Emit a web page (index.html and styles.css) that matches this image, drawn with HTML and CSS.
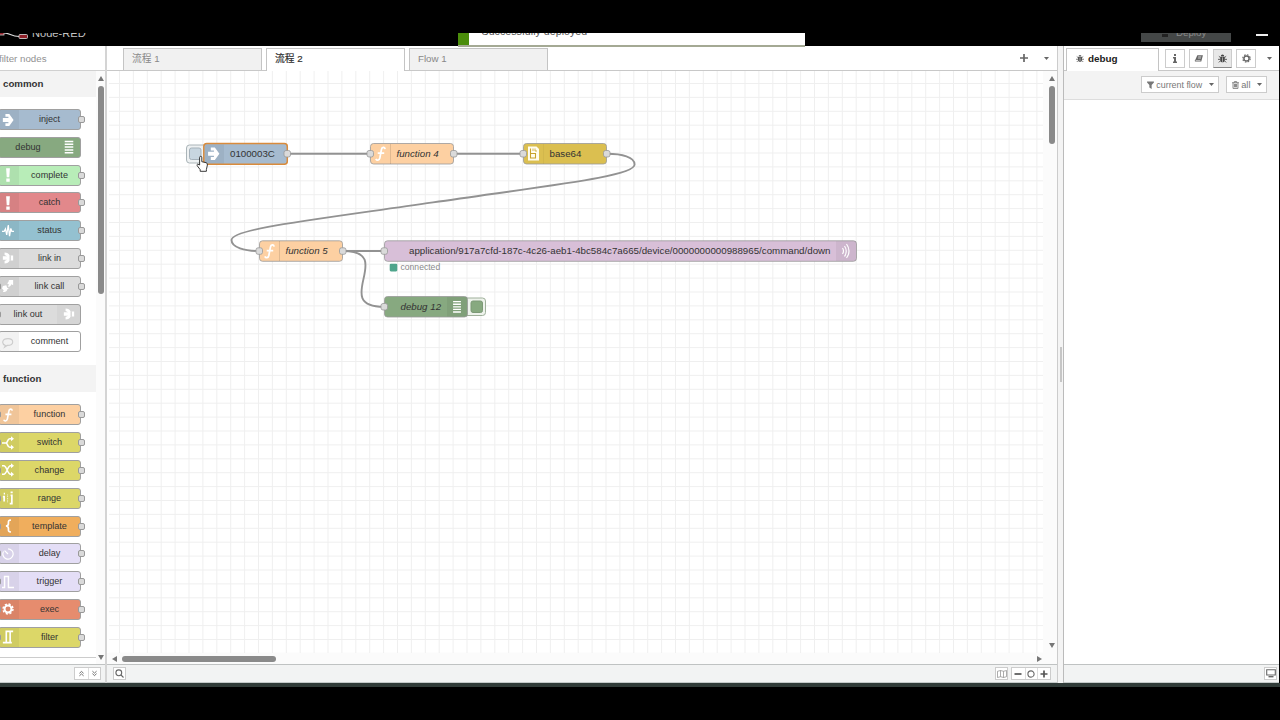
FILE: index.html
```html
<!DOCTYPE html>
<html lang="zh">
<head>
<meta charset="utf-8">
<title>Node-RED</title>
<link rel="stylesheet" href="styles.css">
</head>
<body>
<svg class="defs" width="0" height="0">
  <defs>
    <symbol id="i-arrow" viewBox="0 0 14 16"><path fill="currentColor" d="M4 1h4.500l5 7-5 7H4v-3.300h3.500v-1.500H1V5.800h6.500V4.300H4z"/></symbol>
    <symbol id="i-bars" viewBox="0 0 14 16"><path stroke="currentColor" stroke-width="1.700" d="M2 1.500h10M2 4.800h10M2 8.100h10M2 11.400h10M2 14.700h10"/></symbol>
    <symbol id="i-bang" viewBox="0 0 14 16"><path fill="currentColor" d="M4.800 0h4.400l-.7 10.500h-3zM5 12.200h4V16H5z"/></symbol>
    <symbol id="i-pulse" viewBox="0 0 14 16"><path fill="none" stroke="currentColor" stroke-width="1.500" d="M0 8.500h2.500l1.500-3 1.500 7L7.300 1l1.500 13L10.300 5l1.200 3.500H14"/></symbol>
    <symbol id="i-link" viewBox="0 0 14 16"><path fill="currentColor" d="M3 1.500C6 1.500 8 3 9 5h4v6H9c-1 2-3 3.500-6 3.500v-3l3-1.500H1V6h5L3 4.500z"/><path stroke="#bbb" d="M9.500 5v6"/></symbol>
    <symbol id="i-call" viewBox="0 0 14 16"><path fill="currentColor" d="M8 1h5v6l-2-1c-1 2-2 3-4 3l1-3-2-1c1-1 2-2 2-4zM1 8l4-1 1 3 2 1-2 1c0 2-2 3-5 3l1-2-2-2z"/></symbol>
    <symbol id="i-talk" viewBox="0 0 14 16"><path fill="none" stroke="currentColor" stroke-width="1.300" d="M4 12C-1 10 0 4 7 4s8 8-1 8l-3 2z"/></symbol>
    <symbol id="i-fn" viewBox="0 0 14 16"><path fill="none" stroke="currentColor" stroke-width="1.900" d="M12 3C11.500 .5 8.500 .3 8 3.500L6.300 12.500C5.500 15.500 3 15.700 2 13.500M4 7.200h7"/></symbol>
    <symbol id="i-switch" viewBox="0 0 14 16"><path fill="none" stroke="currentColor" stroke-width="1.900" d="M0 8h4.500C7 8 6 3 9 3h3M4.500 8C7 8 6 13 9 13h3"/><path fill="currentColor" d="M10.500 0L14 3l-3.500 3zM10.500 10l3.500 3-3.500 3z"/></symbol>
    <symbol id="i-change" viewBox="0 0 14 16"><path fill="none" stroke="currentColor" stroke-width="1.800" d="M0 3h2c4 0 4 10 8 10h2M0 13h2c4 0 4-10 8-10h2"/><path fill="currentColor" d="M10.500 0L14 3l-3.500 3zM10.500 10l3.500 3-3.500 3z"/></symbol>
    <symbol id="i-range" viewBox="0 0 14 16"><path fill="none" stroke="currentColor" stroke-width="2" d="M1 6.500h1.500V12M10 5h1.500v9.500H9M2 3h1.500M10 1.500h2.500"/><path stroke="currentColor" stroke-dasharray="1 1" d="M6.500 4v9"/></symbol>
    <symbol id="i-brace" viewBox="0 0 14 16"><path fill="none" stroke="currentColor" stroke-width="2" d="M10.500 1C7 1 7.500 3 7.500 5S7 8 4.500 8c2.500 0 3 1 3 3s-.5 4 3 4"/></symbol>
    <symbol id="i-delay" viewBox="0 0 14 16"><path fill="none" stroke="currentColor" stroke-width="1.400" d="M7 2a6 6 0 1 1-5.200 3M7 8L3 4"/></symbol>
    <symbol id="i-trigger" viewBox="0 0 14 16"><path fill="none" stroke="currentColor" stroke-width="1.700" d="M0 14.500h3V1.500h4.500v13H14"/></symbol>
    <symbol id="i-cog" viewBox="0 0 16 16"><circle cx="8" cy="8" r="4.600" fill="none" stroke="currentColor" stroke-width="2.600"/><circle cx="8" cy="8" r="6.600" fill="none" stroke="currentColor" stroke-width="2" stroke-dasharray="2.800 2.383"/></symbol>
    <symbol id="i-filter" viewBox="0 0 14 16"><path fill="none" stroke="currentColor" stroke-width="1.900" d="M1 14.500h4V1.500h8M9.500 1.500v13H5M9.500 14.500h2"/></symbol>
    <symbol id="i-bug" viewBox="0 0 16 16"><path fill="currentColor" d="M5 4a3 3 0 0 1 6 0zM4 5h8v6c0 5-8 5-8 0z"/><path fill="none" stroke="currentColor" stroke-width="1.500" d="M4.500 6.500L1.500 4M11.500 6.500l3-2.500M4 9.500H0M12 9.500h4M4.500 12l-3 3M11.500 12l3 3"/><path stroke="#eee" d="M8 6v8"/></symbol>
    <symbol id="i-book" viewBox="0 0 16 16"><path fill="currentColor" d="M5 2h10l-3 11.500H2.500C0 13.500 0 11 1.500 10z"/><path fill="none" stroke="#fff" stroke-width="1" d="M6.500 5h5.500M6 7.300h5.500M2 11.500h8.500"/></symbol>
    <symbol id="i-caret" viewBox="0 0 10 6"><path fill="currentColor" d="M0 0h10L5 6z"/></symbol>
    <symbol id="i-funnel" viewBox="0 0 12 14"><path fill="currentColor" d="M0 1h12v1.500L8 7v7l-4-2.500V7L0 2.500z"/></symbol>
    <symbol id="i-trash" viewBox="0 0 12 14"><path fill="none" stroke="currentColor" stroke-width="1.500" d="M0 3h12M4 3V1h4v2M1.700 3v10h8.600V3M4.200 5v6M6 5v6M7.800 5v6"/></symbol>
  </defs>
</svg>

<div class="screen">
  <header class="header">
    <svg class="logo" width="30" height="12" viewBox="0 0 30 12"><path fill="none" stroke="#ddd" stroke-width="1.200" d="M4 0C10 0 11 3.500 19 3.500"/><rect x="-2" y="-3" width="6" height="5" fill="#8f2029" stroke="#ccc" stroke-width=".8"/><rect x="19" y="1.500" width="8.500" height="4" rx="1" fill="#8f2029" stroke="#ccc" stroke-width=".9"/></svg>
    <span class="brand">Node-RED</span>
    <div class="deploy"><i class="deploy-mark"></i><span>Deploy</span></div>
    <i class="menu-bar"></i>
    <div class="notice"><span>Successfully deployed</span></div>
  </header>

  <main class="main">
    <aside class="palette">
      <div class="search">filter nodes</div>
      <div class="palette-body">
        <div class="palette-list">
          <h3 class="cat">common</h3>
          <div class="nodes">
            <div class="node out c-inject"><b><svg><use href="#i-arrow"/></svg></b><span>inject</span></div>
            <div class="node rev c-debug"><b><svg><use href="#i-bars"/></svg></b><span>debug</span></div>
            <div class="node out c-complete"><b><svg><use href="#i-bang"/></svg></b><span>complete</span></div>
            <div class="node out c-catch"><b><svg><use href="#i-bang"/></svg></b><span>catch</span></div>
            <div class="node out c-status"><b><svg><use href="#i-pulse"/></svg></b><span>status</span></div>
            <div class="node out c-link"><b><svg><use href="#i-link"/></svg></b><span>link in</span></div>
            <div class="node in out c-link"><b><svg><use href="#i-call"/></svg></b><span>link call</span></div>
            <div class="node in rev c-link"><b><svg><use href="#i-link"/></svg></b><span>link out</span></div>
            <div class="node c-comment"><b><svg><use href="#i-talk"/></svg></b><span>comment</span></div>
          </div>
          <h3 class="cat cat-fn">function</h3>
          <div class="nodes">
            <div class="node in out c-fn"><b><svg><use href="#i-fn"/></svg></b><span>function</span></div>
            <div class="node in out c-yellow"><b><svg><use href="#i-switch"/></svg></b><span>switch</span></div>
            <div class="node in out c-yellow"><b><svg><use href="#i-change"/></svg></b><span>change</span></div>
            <div class="node in out c-yellow"><b><svg><use href="#i-range"/></svg></b><span>range</span></div>
            <div class="node in out c-template"><b><svg><use href="#i-brace"/></svg></b><span>template</span></div>
            <div class="node in out c-lilac"><b><svg><use href="#i-delay"/></svg></b><span>delay</span></div>
            <div class="node in out c-lilac"><b><svg><use href="#i-trigger"/></svg></b><span>trigger</span></div>
            <div class="node in out c-exec"><b><svg><use href="#i-cog"/></svg></b><span>exec</span></div>
            <div class="node in out c-yellow"><b><svg><use href="#i-filter"/></svg></b><span>filter</span></div>
          </div>
        </div>
        <div class="vscroll">
          <i class="arrow up"></i><i class="thumb thumb-palette"></i><i class="arrow down"></i>
        </div>
      </div>
      <div class="footer palette-footer">
        <div class="group">
          <span class="fbtn"><svg width="5" height="7" viewBox="0 0 6 8"><path class="line" d="M.5 3.800L3 1.500l2.500 2.300M.5 6.800L3 4.500l2.500 2.300"/></svg></span>
          <span class="fbtn"><svg width="5" height="7" viewBox="0 0 6 8"><path class="line" d="M.5 1.200L3 3.500l2.500-2.300M.5 4.200L3 6.500l2.500-2.300"/></svg></span>
        </div>
      </div>
    </aside>

    <section class="workspace">
      <nav class="tabs">
        <div class="tab">流程 1</div>
        <div class="tab active">流程 2</div>
        <div class="tab">Flow 1</div>
        <div class="tab-tools">
          <svg width="8" height="8" viewBox="0 0 8 8"><path stroke="#666" stroke-width="1.700" d="M4 0v8M0 4h8"/></svg>
          <svg class="caret"><use href="#i-caret"/></svg>
        </div>
      </nav>
      <div class="canvas-row">
        <svg class="canvas" width="936" height="582" viewBox="107 71 936 582">
          <defs>
            <pattern id="grid" x="119" y="83" width="13.900" height="13.900" patternUnits="userSpaceOnUse"><path fill="none" stroke="#efefef" d="M.5 0v13.900M0 .5h13.900"/></pattern>
          </defs>
          <rect x="109" y="71" width="934" height="582" fill="url(#grid)"/>
          <g class="wires">
            <path d="M287 153.800H370M454 153.800H523M343 251H384"/>
            <path d="M607 153.800C622 153.800 634.600 157 634.600 164.500C634.600 176 560 184 433 202.400C306 220.800 231.500 229 231.500 240C231.500 247.500 245 251 259 251"/>
            <path d="M343 251C397 251 330 306.800 384 306.800"/>
          </g>

          <rect x="186.500" y="145" width="22" height="18" rx="3" fill="#eef1f2" stroke="#aab4b8"/>
          <rect x="189.500" y="148" width="11.500" height="11.500" rx="2" fill="#c8d6e0" stroke="#a5b1ba"/>
          <rect x="203.800" y="143.500" width="83.500" height="20.700" rx="3" fill="#a6bbcf" stroke="#d98b3c" stroke-width="1.500"/>
          <path class="shade" d="M205 144.500h19v19h-19z"/>
          <use href="#i-arrow" x="207" y="146.500" width="13" height="14.500" color="#fff"/>
          <text x="230" y="157.300">0100003C</text>

          <rect class="box" x="370.500" y="143.500" width="83" height="20.500" rx="3" fill="#fdd0a2"/>
          <path class="split" d="M390.500 144v20"/>
          <use href="#i-fn" x="374" y="145.500" width="13" height="16.500" color="#fff"/>
          <text class="it" x="396.500" y="157.300">function 4</text>

          <rect class="box" x="523.500" y="143.500" width="83" height="20.500" rx="3" fill="#dbbf50"/>
          <path class="split faint" d="M543.500 144v20"/>
          <path fill="#fffdf0" d="M528 146.500h8.500l2.500 2.500v11.500h-11z"/>
          <path fill="none" stroke="#c8a22c" stroke-width="1.100" d="M530.500 148.500v9.500h5v-4.500h-5"/>
          <path fill="none" stroke="#c8a22c" stroke-width=".8" d="M533 148.500v2.500M535 148.500v2.500h2"/>
          <text x="549.500" y="157.300">base64</text>

          <rect class="box" x="259.500" y="240.800" width="83" height="20.500" rx="3" fill="#fdd0a2"/>
          <path class="split" d="M279.500 241v20"/>
          <use href="#i-fn" x="263" y="243" width="13" height="16.500" color="#fff"/>
          <text class="it" x="285.500" y="254.300">function 5</text>

          <rect class="box" x="384.500" y="240.800" width="472" height="20.500" rx="3" fill="#d8bfd8"/>
          <path class="shade" d="M836 241.300h20v19.500h-20z"/>
          <path fill="none" stroke="#fff" stroke-width="1.200" d="M842.500 248q2 3 0 6M844.500 246q3.500 5 0 10.500M846.500 244q5 7 0 14"/>
          <text x="409" y="254.300" textLength="421.500">application/917a7cfd-187c-4c26-aeb1-4bc584c7a665/device/0000000000988965/command/down</text>
          <rect x="389.700" y="263.800" width="7.600" height="7.600" rx="1.300" fill="#4fa58c"/>
          <text class="status" x="400.500" y="270.300">connected</text>

          <rect x="462" y="298" width="23.500" height="17.500" rx="3" fill="#eef3ec" stroke="#9fb09b"/>
          <rect x="471" y="301" width="11.500" height="11.500" rx="2" fill="#87a980" stroke="#7c9977"/>
          <rect class="box" x="384.500" y="296.500" width="83" height="20.500" rx="3" fill="#87a980"/>
          <path class="shade" d="M447 297h20v19.500h-20z"/>
          <use href="#i-bars" x="451.500" y="300" width="11" height="13.500" color="#fff"/>
          <text class="it" x="400.500" y="310.300">debug 12</text>

          <g class="ports">
            <rect x="284" y="150.500" width="6.500" height="6.500" rx="2"/><rect x="367" y="150.500" width="6.500" height="6.500" rx="2"/>
            <rect x="450.500" y="150.500" width="6.500" height="6.500" rx="2"/><rect x="520" y="150.500" width="6.500" height="6.500" rx="2"/>
            <rect x="603.500" y="150.500" width="6.500" height="6.500" rx="2"/><rect x="256" y="247.800" width="6.500" height="6.500" rx="2"/>
            <rect x="339.500" y="247.800" width="6.500" height="6.500" rx="2"/><rect x="381" y="247.800" width="6.500" height="6.500" rx="2"/>
            <rect x="381" y="303.500" width="6.500" height="6.500" rx="2"/>
          </g>
          <path fill="#fff" stroke="#222" stroke-width=".9" stroke-linejoin="round" d="M199.600 165v-7.300q0-1.400 1.100-1.400t1.100 1.400v4l4.300 1q1.500.5 1.300 2.300l-1 4.500v1.800h-6.200v-1.600l-3-4q-.6-1.300.5-1.600z"/>
        </svg>
        <div class="vscroll vscroll-ws">
          <i class="arrow up"></i><i class="thumb thumb-ws"></i><i class="arrow down"></i>
        </div>
      </div>
      <div class="hscroll"><i class="arrow left"></i><i class="hthumb"></i><i class="arrow right"></i></div>
      <div class="footer ws-footer">
        <span class="fbtn boxed"><svg width="9" height="9" viewBox="0 0 9 9"><circle class="line" cx="3.800" cy="3.800" r="2.900"/><path class="line" d="M6 6l2.500 2.500"/></svg></span>
        <div class="zoomers">
          <span class="fbtn boxed"><svg width="10" height="8" viewBox="0 0 10 8"><path class="line thin" d="M.5 1.300l3-.8 3 .8 3-.8v6.200l-3 .8-3-.8-3 .8zM3.500.500v6.200M6.500 1.300v6.200"/></svg></span>
          <div class="group">
            <span class="fbtn"><svg width="8" height="8" viewBox="0 0 8 8"><path stroke="#555" stroke-width="1.700" d="M.5 4h7"/></svg></span>
            <span class="fbtn"><svg width="8" height="8" viewBox="0 0 8 8"><circle class="line" cx="4" cy="4" r="3.100"/></svg></span>
            <span class="fbtn"><svg width="8" height="8" viewBox="0 0 8 8"><path stroke="#555" stroke-width="1.700" d="M4 .5v7M.5 4h7"/></svg></span>
          </div>
        </div>
      </div>
    </section>

    <div class="separator"><i></i></div>

    <aside class="sidebar">
      <nav class="side-tabs">
        <div class="side-tab"><svg width="8" height="9"><use href="#i-bug"/></svg><span>debug</span></div>
        <div class="side-btns">
          <span class="sbtn"><svg width="6" height="9" viewBox="0 0 6 9"><path fill="#666" d="M2 0h2v2H2zM1 3h3v4.500h1V9H1V7.500h1v-3H1z"/></svg></span>
          <span class="sbtn"><svg width="10" height="9"><use href="#i-book"/></svg></span>
          <span class="sbtn on"><svg width="9" height="9"><use href="#i-bug"/></svg></span>
          <span class="sbtn"><svg width="9" height="9"><use href="#i-cog"/></svg></span>
        </div>
        <svg class="caret"><use href="#i-caret"/></svg>
      </nav>
      <div class="side-tools">
        <div class="tool"><svg width="7" height="8"><use href="#i-funnel"/></svg><span class="t-flow">current flow</span><svg class="caret"><use href="#i-caret"/></svg></div>
        <div class="tool"><svg width="7" height="8"><use href="#i-trash"/></svg><span>all</span><svg class="caret"><use href="#i-caret"/></svg></div>
      </div>
      <div class="side-body"></div>
      <div class="footer side-footer">
        <span class="fbtn boxed"><svg width="10" height="9" viewBox="0 0 10 9"><path class="line" d="M.7.700h8.600v5.300H.7z"/><path stroke="#666" stroke-width="1.400" d="M2.500 7.700h5"/></svg></span>
      </div>
    </aside>
  </main>
  <div class="taskbar"></div>
</div>
</body>
</html>
```
FILE: styles.css
```css
*, *::before, *::after { box-sizing: border-box; }
body {
  margin: 0;
  background: #000;
  font-family: "Liberation Sans", "Noto Sans CJK SC", Arial, sans-serif;
  font-size: 9.73px;
  color: #444;
}
.defs { position: absolute; }
svg { display: block; flex: none; }
i { display: block; flex: none; }
.screen { width: 1280px; height: 720px; padding-top: 33px; overflow: hidden; display: flex; flex-direction: column; }

.header { height: 13px; flex: none; display: flex; align-items: flex-start; position: relative; }
.header > * { flex: none; }
.logo { width: 30px; overflow: hidden; }
.brand { width: 1109px; height: 6px; margin-left: 2px; display: flex; align-items: flex-end; font-size: 11.1px; line-height: 11px; color: #c4c4c4; overflow: hidden; }
.brand, .deploy span, .notice span { clip-path: inset(0); }
.deploy { width: 90px; height: 9px; background: #444747; color: #8a8a8a; display: flex; align-items: flex-start; overflow: hidden; }
.deploy-mark { width: 6px; height: 3px; background: #222; margin: 1px 8px 0 21px; }
.deploy span { height: 5px; display: flex; align-items: flex-end; line-height: 11px; }
.menu-bar { width: 12px; height: 2px; background: #eee; margin: 1px 0 0 25px; }
.notice { position: absolute; z-index: 2; left: 458px; top: 0; width: 347px; height: 13.5px; background: linear-gradient(90deg, #4b8d0b 11px, #fff 11px); border-bottom: 2px solid #a4a994; padding-left: 23.5px; font-size: 10.7px; color: #555; }
.notice span { height: 5px; display: flex; align-items: flex-end; line-height: 13px; }

.main { height: 637px; flex: none; display: flex; background: #f3f3f3; width: 1279px; }

.palette { width: 107px; flex: none; border-right: 2px solid #d4d4d4; background: #fff; display: flex; flex-direction: column; }
.search { height: 25px; line-height: 25px; color: #929292; border-bottom: 1px solid #d0d0d0; flex: none; margin-left: -1px; }
.palette-body { flex: 1; display: flex; overflow: hidden; }
.palette-list { width: 96px; height: 587px; overflow: hidden; border-bottom: 1px solid #ccc; }
.cat { margin: 0; height: 26px; line-height: 26px; background: #f3f3f3; font-size: 9.73px; font-weight: bold; color: #333; padding-left: 3px; }
.cat-fn { margin-top: 13px; height: 27px; line-height: 27px; }
.nodes { padding: 12px 0 0; display: flex; flex-direction: column; gap: 6.8px; margin-left: -2px; }
.node { position: relative; width: 83px; height: 21px; border: 1px solid #a0a0a0; border-radius: 3px; display: flex; font-size: 9.1px; color: #333; flex: none; }
.node b { width: 20px; background: rgba(0,0,0,.05); color: #fff; display: flex; align-items: center; justify-content: center; padding-right: 3px; }
.node b svg { width: 12px; height: 14px; }
.node span { flex: 1; text-align: center; line-height: 19px; }
.node.rev { flex-direction: row-reverse; }
.node.rev b { width: 23px; padding-right: 0; }
.node.in::before, .node.out::after { content: ""; position: absolute; top: 6px; width: 7px; height: 7px; border: 1px solid #999; border-radius: 2px; background: #dadada; }
.node.in::before { left: -5px; }
.node.out::after { right: -5px; }
.c-inject { background: #a6bbcf; }
.c-debug { background: #87a980; }
.node.c-debug b { background: none; }
.c-complete { background: #b8edb8; }
.c-catch { background: #e2888b; }
.c-status { background: #94c1d0; }
.c-link { background: #dcdcdc; }
.node.rev.c-link b { background: rgba(0,0,0,.03); }
.c-comment { background: #fff; }
.node.c-comment b { color: #ccc; }
.c-fn { background: #fdd0a2; }
.c-yellow { background: #dcd768; }
.c-template { background: #f0ae5d; }
.c-lilac { background: #e4def6; }
.c-exec { background: #e68c6e; }

.vscroll { flex: 1; display: flex; flex-direction: column; align-items: center; background: #fbfbfb; padding: 5px 0 4px; }
.arrow { width: 0; height: 0; border: 3px solid transparent; }
.up { border-bottom: 5px solid #777; border-top: 0; }
.down { border-top: 5px solid #777; border-bottom: 0; margin-top: auto; }
.left { border-right: 5px solid #777; border-left: 0; }
.right { border-left: 5px solid #777; border-right: 0; }
.thumb { width: 6px; border-radius: 3px; background: #8a8a8a; margin-top: 5px; }
.thumb-palette { height: 208px; }
.thumb-ws { height: 58px; }

.footer { flex: none; height: 19px; border-top: 1px solid #bfc2c2; border-bottom: 1px solid #c5caca; background: #f2f3f3; display: flex; align-items: center; }
.palette-footer { justify-content: flex-end; padding-right: 4px; }
.group { display: flex; border: 1px solid #ccc; background: #fff; height: 13px; }
.fbtn { width: 12.5px; display: flex; align-items: center; justify-content: center; }
.fbtn + .fbtn { border-left: 1px solid #ddd; }
.boxed { width: 13px; height: 13px; border: 1px solid #ccc; background: #fff; }
.line { fill: none; stroke: #666; stroke-width: 1.1; }
.thin { stroke-width: .7; stroke: #888; }

.workspace { width: 950px; flex: none; background: #fff; display: flex; flex-direction: column; }
.tabs { height: 25px; flex: none; display: flex; align-items: flex-end; gap: 4px; padding-left: 16px; border-bottom: 1px solid #c8c8c8; }
.tab { width: 139px; height: 22px; border: 1px solid #c4c4c4; border-bottom: 0; background: #f1f1f1; line-height: 20px; padding-left: 8px; color: #888; }
.tab.active { background: #fff; height: 23px; margin-bottom: -1px; color: #333; -webkit-text-stroke: .2px #333; }
.tab-tools { margin-left: auto; height: 24px; display: flex; align-items: center; gap: 16px; padding-right: 8px; }
.caret { width: 5px; height: 3px; color: #666; }
.canvas-row { flex: 1; display: flex; }
.canvas text { font-size: 9.73px; fill: #333; }
.canvas .it { font-style: italic; }
.canvas .status { font-size: 8.6px; fill: #888; }
.wires path { fill: none; stroke: #929292; stroke-width: 1.9; }
.box { stroke: #999; stroke-width: .8; }
.shade { fill: #000; fill-opacity: .05; }
.split { stroke: #000; stroke-opacity: .11; }
.faint { stroke-opacity: .04; }
.ports rect { fill: #dadada; stroke: #999; stroke-width: .8; }
.vscroll-ws { padding: 5px 0 5px 4px; }
.hscroll { height: 11px; flex: none; display: flex; align-items: center; background: #fbfbfb; padding: 0 15px 0 5px; }
.hthumb { width: 154px; height: 6px; border-radius: 3px; background: #8a8a8a; margin-left: 5px; }
.hscroll .right { margin-left: auto; }
.ws-footer { padding: 0 6px; justify-content: space-between; }
.zoomers { display: flex; gap: 3px; }
.zoomers .boxed { margin-right: -.5px; }
.zoomers .group .fbtn { width: 12.7px; }

.separator { width: 7px; flex: none; background: #f4f4f4; border-left: 1px solid #ccc; border-right: 1px solid #bbb; display: flex; align-items: center; justify-content: center; }
.separator i { width: 2px; height: 35px; border: 1px solid #c6c6c6; }

.sidebar { flex: 1; background: #fff; display: flex; flex-direction: column; }
.side-tabs { height: 25px; flex: none; display: flex; align-items: flex-end; padding: 0 7px 0 2px; border-bottom: 1px solid #c8c8c8; }
.side-tab { width: 93px; height: 23px; margin-bottom: -1px; background: #fff; border: 1px solid #c4c4c4; border-bottom: 0; display: flex; align-items: center; gap: 4px; padding: 0 0 3px 9px; font-size: 9.9px; font-weight: bold; color: #222; }
.side-tab svg { color: #555; }
.side-btns { display: flex; gap: 4.3px; margin: 0 auto 2px 6px; }
.sbtn { width: 19.5px; height: 19.5px; border: 1px solid #ccc; display: flex; align-items: center; justify-content: center; color: #666; }
.sbtn.on { background: #e8e8e8; border-bottom: 1px solid #888; color: #444; }
.side-tabs .caret { margin-bottom: 10px; }
.side-tools { height: 29px; flex: none; background: #f3f3f3; border-bottom: 1px solid #ddd; display: flex; justify-content: flex-end; align-items: center; gap: 7px; padding: 0 12px 1px 0; }
.tool { height: 17px; border: 1px solid #ccc; background: #fff; display: flex; align-items: center; gap: 2.5px; padding: 0 4px 0 5px; color: #777; font-size: 9.3px; }
.tool .caret { margin-left: 4px; }
.t-flow { font-size: 8.9px; }
.side-body { flex: 1; }
.side-footer { justify-content: flex-end; padding-right: 2px; }
.taskbar { height: 4px; flex: none; background: #303b38; }
```
